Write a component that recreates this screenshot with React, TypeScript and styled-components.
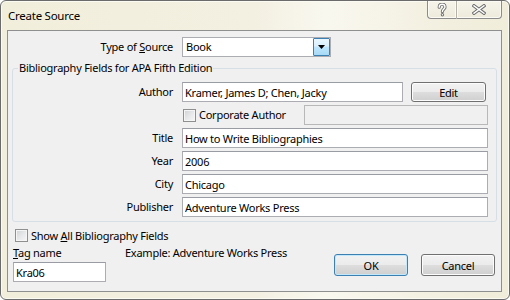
import React from 'react';
import styled, { createGlobalStyle } from 'styled-components';

const GlobalStyle = createGlobalStyle`
    html, body {
        margin: 0;
        padding: 0;
        background: #ffffff;
    }
    body {
        font-family: 'Noto Sans', 'Open Sans', sans-serif;
        font-size: 11px;
        letter-spacing: -0.25px;
        color: #000000;
    }
    * {
        box-sizing: border-box;
    }
`;

const HelpGlyph = () => (
    <svg width="10" height="14" viewBox="0 0 10 14">
        <path
            d="M2.2 4.2 C2.2 2.2 3.6 1.2 5.1 1.2 C6.8 1.2 8 2.3 8 3.9 C8 5.9 5.4 6.3 5.4 8.6"
            fill="none"
            stroke="#6f6f6f"
            strokeWidth="3.2"
            strokeLinecap="round"
        />
        <path
            d="M2.2 4.2 C2.2 2.2 3.6 1.2 5.1 1.2 C6.8 1.2 8 2.3 8 3.9 C8 5.9 5.4 6.3 5.4 8.6"
            fill="none"
            stroke="#ffffff"
            strokeWidth="1.4"
            strokeLinecap="round"
        />
        <circle cx="5.4" cy="11.8" r="1.7" fill="#6f6f6f" />
        <circle cx="5.4" cy="11.8" r="0.7" fill="#ffffff" />
    </svg>
);

const CloseGlyph = () => (
    <svg width="14" height="11" viewBox="0 0 14 11">
        <path d="M2 1.8 L12 9.2 M12 1.8 L2 9.2" stroke="#6f6f6f" strokeWidth="3.4" strokeLinecap="square" />
        <path d="M2 1.8 L12 9.2 M12 1.8 L2 9.2" stroke="#ffffff" strokeWidth="1.4" strokeLinecap="square" />
    </svg>
);

const ArrowGlyph = () => (
    <svg width="7" height="4" viewBox="0 0 7 4">
        <path d="M0 0 H7 L3.5 4 Z" fill="#000000" />
    </svg>
);

export default function App() {
    return (
        <>
            <GlobalStyle />
            <Window>
                <TitleBar>
                    <Title>Create Source</Title>
                    <CaptionGroup>
                        <CaptionButton $width={29}>
                            <HelpGlyph />
                        </CaptionButton>
                        <CaptionButton $width={46}>
                            <CloseGlyph />
                        </CaptionButton>
                    </CaptionGroup>
                </TitleBar>
                <Client>
                    <TypeRow>
                        <Label>
                            Type of <u>S</u>ource
                        </Label>
                        <Combo>
                            <ComboText>Book</ComboText>
                            <DropButton>
                                <ArrowGlyph />
                            </DropButton>
                        </Combo>
                    </TypeRow>

                    <Group>
                        <Legend>Bibliography Fields for APA Fifth Edition</Legend>
                        <FieldGrid>
                            <Label>Author</Label>
                            <Inline>
                                <TextBox readOnly value="Kramer, James D; Chen, Jacky" />
                                <PushButton $width={75} $height={20}>Edit</PushButton>
                            </Inline>

                            <span />
                            <Inline>
                                <CheckLabel $width={114} $indent={1}>
                                    <CheckBox />
                                    <span>Corporate Author</span>
                                </CheckLabel>
                                <TextBox readOnly disabled value="" />
                            </Inline>

                            <Label>Title</Label>
                            <TextBox readOnly value="How to Write Bibliographies" />

                            <Label>Year</Label>
                            <TextBox readOnly value="2006" />

                            <Label>City</Label>
                            <TextBox readOnly value="Chicago" />

                            <Label>Publisher</Label>
                            <TextBox readOnly value="Adventure Works Press" />
                        </FieldGrid>
                    </Group>

                    <ShowAllRow>
                        <CheckLabel $indent={0}>
                            <CheckBox />
                            <span>
                                Show <u>A</u>ll Bibliography Fields
                            </span>
                        </CheckLabel>
                    </ShowAllRow>

                    <BottomRow>
                        <TagColumn>
                            <Caption>
                                <u>T</u>ag name
                            </Caption>
                            <TagBox readOnly value="Kra06" />
                        </TagColumn>
                        <Example>Example: Adventure Works Press</Example>
                        <ButtonSet>
                            <PushButton $width={74} $height={22} $default>
                                OK
                            </PushButton>
                            <PushButton $width={74} $height={22}>
                                Cancel
                            </PushButton>
                        </ButtonSet>
                    </BottomRow>
                </Client>
            </Window>
        </>
    );
}

const Window = styled.div`
    width: 510px;
    height: 300px;
    display: flex;
    flex-direction: column;
    border: 1px solid #6b6b6b;
    border-radius: 6px;
    overflow: hidden;
    background: linear-gradient(
        90deg,
        #f1eedb 0%,
        #f3f0e2 50%,
        #f9f8ef 64%,
        #f7f5ea 72%,
        #f2efdf 88%,
        #f0edda 100%
    );
    box-shadow: inset 0 0 0 1px #fbfaf3;
`;

const TitleBar = styled.div`
    height: 29px;
    flex: none;
    display: flex;
    align-items: flex-start;
    padding-left: 7px;
`;

const Title = styled.div`
    margin-top: 7px;
    line-height: 16px;
    font-size: 11.5px;
`;

const CaptionGroup = styled.div`
    margin-left: auto;
    margin-right: 7px;
    display: flex;
    height: 18px;
`;

const CaptionButton = styled.div<{ $width: number }>`
    width: ${(p) => p.$width}px;
    height: 18px;
    display: flex;
    align-items: center;
    justify-content: center;
    border: 1px solid #8c8c8c;
    border-top: none;
    background: linear-gradient(#f6f4ea, #eeebdc);
    box-shadow: inset 0 0 0 1px #fbfaf4;

    &:first-child {
        border-radius: 0 0 0 4px;
        border-right: none;
    }
    &:last-child {
        border-radius: 0 0 4px 0;
    }
    & + & {
        border-left: 1px solid #b4b2a8;
    }
`;

const Client = styled.div`
    flex: 1;
    margin: 0 7px 7px 6px;
    border: 1px solid #8e8f8f;
    background: #f0f0f0;
    padding: 6px 4px 0 4px;
    display: flex;
    flex-direction: column;
`;

const Label = styled.div`
    text-align: right;
    line-height: 16px;
    white-space: nowrap;
`;

const TypeRow = styled.div`
    display: grid;
    grid-template-columns: 161px 149px;
    column-gap: 9px;
    align-items: center;
    height: 20px;
`;

const Combo = styled.div`
    height: 20px;
    display: flex;
    align-items: stretch;
    border: 1px solid #abadb3;
    background: #ffffff;
    padding: 0 0 0 3px;
`;

const ComboText = styled.div`
    flex: 1;
    line-height: 18px;
`;

const DropButton = styled.div`
    width: 17px;
    display: flex;
    align-items: center;
    justify-content: center;
    border: 1px solid #3c7fb1;
    border-radius: 1px;
    background: linear-gradient(#eaf6fd 0%, #d9f0fc 45%, #bee6fd 50%, #a7d9f5 100%);
`;

const Group = styled.fieldset`
    margin: 3px 0 0 0;
    padding: 6px 8px 4px 0;
    border: 1px solid #d5dfe5;
    border-radius: 3px;
    min-width: 0;
`;

const Legend = styled.legend`
    margin-left: 5px;
    padding: 0 1px;
    line-height: 16px;
`;

const FieldGrid = styled.div`
    display: grid;
    grid-template-columns: 160px 1fr;
    grid-auto-rows: 20px;
    column-gap: 9px;
    row-gap: 3px;
    align-items: center;
`;

const Inline = styled.div`
    display: flex;
    align-items: center;
    gap: 8px;
    height: 20px;
`;

const TextBox = styled.input`
    flex: 1;
    min-width: 0;
    width: 100%;
    height: 20px;
    margin: 0;
    padding: 0 2px;
    font-family: inherit;
    font-size: inherit;
    letter-spacing: inherit;
    color: #000000;
    border: 1px solid #abadb3;
    border-top-color: #9a9ca3;
    border-radius: 0;
    background: #ffffff;
    outline: none;

    &:disabled {
        background: #f0f0f0;
        border-color: #b8b8b8;
    }
`;

const PushButton = styled.button<{ $width: number; $height: number; $default?: boolean }>`
    width: ${(p) => p.$width}px;
    height: ${(p) => p.$height}px;
    flex: none;
    margin: 0 2px 0 0;
    padding: 0;
    font-family: inherit;
    font-size: inherit;
    letter-spacing: inherit;
    color: #000000;
    border: 1px solid ${(p) => (p.$default ? '#3c7fb1' : '#707070')};
    border-radius: 3px;
    background: linear-gradient(#f2f2f2 0%, #ebebeb 50%, #dddddd 51%, #cfcfcf 100%);
    box-shadow: inset 0 0 0 1px ${(p) => (p.$default ? '#c4e8fb' : '#fcfcfc')};
`;

const CheckLabel = styled.div<{ $width?: number; $indent: number }>`
    display: flex;
    align-items: center;
    gap: 3px;
    flex: none;
    width: ${(p) => (p.$width ? `${p.$width}px` : 'auto')};
    padding-left: ${(p) => p.$indent}px;
    line-height: 16px;
    white-space: nowrap;
`;

const CheckBox = styled.span`
    width: 13px;
    height: 13px;
    flex: none;
    border: 1px solid #8e8f8f;
    background: linear-gradient(135deg, #cfd1d4 0%, #e6e7e9 50%, #f7f7f7 100%);
    box-shadow: inset 0 0 0 1px #f5f5f5;
`;

const ShowAllRow = styled.div`
    margin-top: 6px;
    height: 15px;
    display: flex;
    align-items: center;
    padding-left: 3px;
`;

const BottomRow = styled.div`
    margin-top: 1px;
    display: flex;
    align-items: flex-start;
`;

const TagColumn = styled.div`
    margin-left: 1px;
    display: flex;
    flex-direction: column;
    gap: 1px;
`;

const Caption = styled.div`
    margin-top: 1px;
    line-height: 16px;
`;

const TagBox = styled(TextBox)`
    flex: none;
    width: 93px;
`;

const Example = styled.div`
    margin: 1px 0 0 19px;
    line-height: 16px;
`;

const ButtonSet = styled.div`
    margin-left: auto;
    margin-top: 10px;
    display: flex;
    gap: 11px;
`;
